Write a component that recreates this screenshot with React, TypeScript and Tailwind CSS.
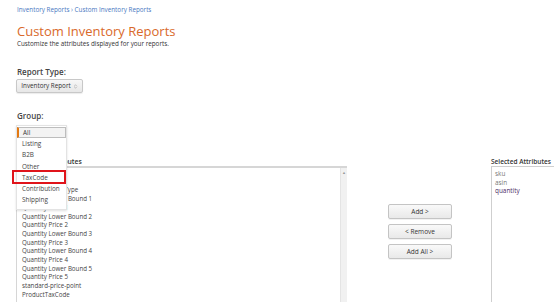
import { ChevronsUpDown } from 'lucide-react';

const available = [
  'Business Price',
  'price',
  'Quantity Price Type',
  'Quantity Lower Bound 1',
  'Quantity Price 1',
  'Quantity Lower Bound 2',
  'Quantity Price 2',
  'Quantity Lower Bound 3',
  'Quantity Price 3',
  'Quantity Lower Bound 4',
  'Quantity Price 4',
  'Quantity Lower Bound 5',
  'Quantity Price 5',
  'standard-price-point',
  'ProductTaxCode',
];

const groups = ['All', 'Listing', 'B2B', 'Other', 'TaxCode', 'Contribution', 'Shipping'];

function GrayButton({ label }: { label: string }) {
  return (
    <button className="w-[64px] h-[15px] rounded-[2px] border border-[#c4c4c4] bg-gradient-to-b from-[#f9f9f9] to-[#e9e9e9] text-[6.5px] text-[#333] shadow-[0_1px_0_rgba(0,0,0,0.05)]">
      {label}
    </button>
  );
}

export default function App() {
  return (
    <div className="relative w-[554px] h-[302px] overflow-hidden bg-white font-['Open_Sans',sans-serif] text-[#333]">
      <div className="pl-[17px] pt-[6px]">
        {/* breadcrumb */}
        <div className="text-[6.3px] leading-[8px] text-[#4a78c2]">
          Inventory Reports › Custom Inventory Reports
        </div>

        <h1 className="mt-[8px] text-[13px] leading-[18px] text-[#d9692a]">Custom Inventory Reports</h1>
        <p className="text-[6.3px] leading-[8px] text-[#333]">
          Customize the attributes displayed for your reports.
        </p>

        <div className="mt-[19px] text-[8px] leading-[10px] font-semibold text-[#444]">Report Type:</div>
        <button className="mt-[2px] -ml-[1px] flex items-center gap-[2px] h-[14px] w-[67px] justify-center rounded-[2px] border border-[#c8c8c8] bg-gradient-to-b from-[#f7f7f7] to-[#e7e7e7] text-[6.3px] text-[#333] shadow-[0_1px_1px_rgba(0,0,0,0.08)]">
          Inventory Report
          <ChevronsUpDown className="w-[5px] h-[5px] text-[#777]" />
        </button>

        <div className="mt-[18px] text-[8px] leading-[10px] font-semibold text-[#444]">Group:</div>
      </div>

      {/* attributes area */}
      <div className="mt-[37px] flex pl-[16px]">
        <div className="w-[331px] shrink-0">
          <div className="pl-[1px] text-[6.8px] leading-[8px] font-semibold text-[#333]">Available Attributes</div>
          <div className="flex h-[160px] border-t-2 border-l border-[#d6d6d6]">
            <div className="flex-1 pl-[5px] pt-[1px]">
              {available.map((a, i) => (
                <div key={i} className="text-[6.2px] leading-[8.7px] text-[#444] whitespace-nowrap">
                  {a}
                </div>
              ))}
            </div>
            <div className="w-[7px] flex flex-col items-center justify-between bg-[#f1f1f1] border-l border-[#e4e4e4] pt-[3px] pb-[2px]">
              <span className="text-[4px] leading-[4px] text-[#999]">▲</span>
              <span className="text-[4px] leading-[4px] text-[#999]">▼</span>
            </div>
          </div>
        </div>

        <div className="w-[144px] shrink-0 flex flex-col items-center gap-[5px] pt-[46px] pl-[2px]">
          <GrayButton label="Add >" />
          <GrayButton label="< Remove" />
          <GrayButton label="Add All >" />
        </div>

        <div className="flex-1 shrink-0">
          <div className="text-[6.5px] leading-[8px] font-semibold text-[#333] whitespace-nowrap">Selected Attributes</div>
          <div className="h-[160px] border-t border-l border-[#cfcfcf] pl-[3px] pt-[3px]">
            <div className="text-[6.4px] leading-[8.7px] text-[#777]">sku</div>
            <div className="text-[6.4px] leading-[8.7px] text-[#777]">asin</div>
            <div className="text-[6.4px] leading-[8.7px] text-[#4b2a66]">quantity</div>
          </div>
        </div>
      </div>

      {/* open Group dropdown */}
      <div className="absolute left-[16px] top-[125px] w-[51px] bg-white border border-[#e3e3e3] shadow-[0_1px_2px_rgba(0,0,0,0.12)] pt-[1px] pb-[3px]">
        {groups.map((g, i) => (
          <div
            key={g}
            className={
              i === 0
                ? 'h-[11px] pl-[4px] border border-[#bdbdbd] border-l-2 border-l-[#e47911] bg-[#f3f3f3] text-[6.4px] leading-[9px] text-[#333]'
                : 'h-[11.3px] pl-[5px] text-[6.4px] leading-[11.3px] text-[#444]'
            }
          >
            {g}
          </div>
        ))}
      </div>

      {/* highlight box */}
      <div className="absolute left-[12px] top-[170px] w-[54px] h-[14px] border-2 border-[#e0141b]" />
    </div>
  );
}
